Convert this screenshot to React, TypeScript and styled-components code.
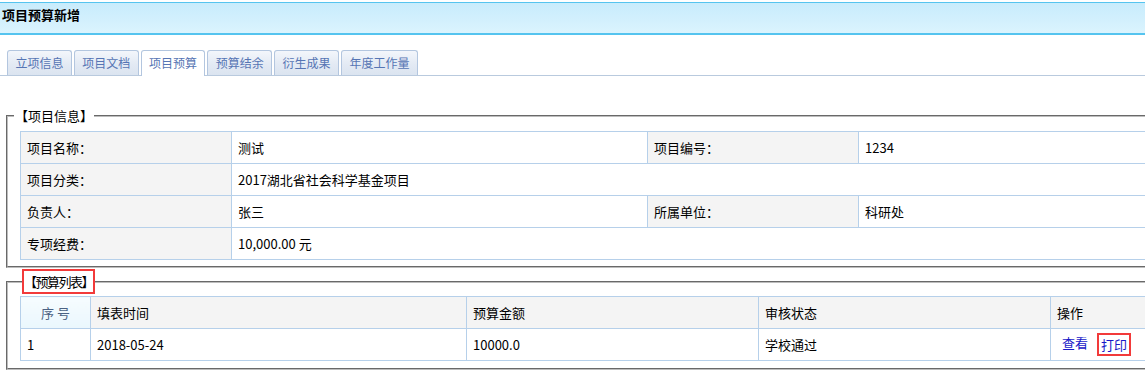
import React from "react";
import styled, { createGlobalStyle, css } from "styled-components";

const GlobalStyle = createGlobalStyle`
  html, body {
    margin: 0;
    padding: 0;
    background: #ffffff;
    overflow: hidden;
  }
  body {
    font-family: "Noto Sans CJK SC", "Liberation Sans", sans-serif;
    font-size: 13px;
    color: #000;
  }
`;

const Page = styled.div`
  padding-top: 2px;
  width: 1145px;
  overflow: hidden;
`;

const Header = styled.div`
  border-top: 1px solid #55c4ef;
  border-bottom: 2px solid #55c4ef;
  background: linear-gradient(180deg, #c8ecfc 0%, #d3f0fd 60%, #dbf4fe 100%);
  padding: 4px 0 0 2px;
  box-sizing: border-box;
  height: 33px;
`;

const Title = styled.h1`
  margin: 0;
  font-size: 13px;
  line-height: 16px;
  font-weight: 700;
  color: #000;
`;

const TabBar = styled.div`
  display: flex;
  align-items: flex-end;
  gap: 2px;
  margin-top: 15px;
  padding-left: 7px;
  border-bottom: 1px solid #b9cade;
  height: 25px;
`;

const Tab = styled.div<{ $active?: boolean }>`
  height: 24px;
  line-height: 24px;
  padding: 0 7.4px;
  font-size: 12px;
  color: #5675b4;
  border: 1px solid #b3c6df;
  border-bottom: none;
  border-radius: 3px 3px 0 0;
  background: linear-gradient(180deg, #f3f6fb 0%, #e3eaf4 55%, #dbe4f0 100%);
  white-space: nowrap;
  ${(p) =>
    p.$active &&
    css`
      background: #ffffff;
      height: 25px;
      margin-bottom: -1px;
    `}
`;

const FieldSet = styled.fieldset<{ $gap: number }>`
  margin: ${(p) => p.$gap}px 0 0 6px;
  padding: 0;
  width: 1282px;
  box-sizing: border-box;
  border: 2px groove #bdbdbd;
  min-inline-size: auto;
`;

const Legend = styled.legend`
  margin-left: 6px;
  padding: 0 1px;
  font-size: 13px;
  line-height: 16px;
`;

const MarkedLegend = styled.legend`
  margin-left: 14px;
  padding: 0;
`;

const Highlight = styled.span<{ $tight?: boolean }>`
  display: inline-block;
  border: 2px solid #f23a3a;
  ${(p) =>
    p.$tight
      ? css`
          padding: 2px 0;
          font-size: 13px;
          line-height: 17px;
          letter-spacing: -1.5px;
        `
      : css`
          padding: 0 2px;
          line-height: 19px;
          margin-left: 9px;
          vertical-align: middle;
        `}
`;

const FieldBody = styled.div<{ $top: number; $bottom: number }>`
  padding: ${(p) => p.$top}px 12px ${(p) => p.$bottom}px 12px;
`;

const Table = styled.table`
  border-collapse: collapse;
  table-layout: fixed;
  width: 1254px;
`;

const Cell = styled.td<{ $label?: boolean }>`
  height: 31px;
  padding: 0 6px;
  border: 1px solid #b6d0ea;
  font-size: 13px;
  line-height: 16px;
  color: #000;
  white-space: nowrap;
  background: ${(p) => (p.$label ? "#f4f4f4" : "#ffffff")};
`;

const HeadCell = styled.th<{ $index?: boolean }>`
  height: 31px;
  padding: 0 6px;
  border: 1px solid #b6d0ea;
  font-size: 13px;
  line-height: 16px;
  font-weight: 400;
  text-align: ${(p) => (p.$index ? "center" : "left")};
  color: ${(p) => (p.$index ? "#4b6283" : "#000")};
  background: ${(p) =>
    p.$index ? "linear-gradient(180deg, #f6fcff 0%, #eaf7fd 100%)" : "#f4f4f4"};
`;

const ActionLink = styled.a`
  color: #1818c8;
  text-decoration: none;
  margin-left: 5px;
  cursor: pointer;
`;

const PlainLink = styled.a`
  color: #1818c8;
  text-decoration: none;
  cursor: pointer;
`;

const tabs = ["立项信息", "项目文档", "项目预算", "预算结余", "衍生成果", "年度工作量"];

const infoRows: [string, string, string?, string?][] = [
  ["项目名称：", "测试", "项目编号：", "1234"],
  ["项目分类：", "2017湖北省社会科学基金项目"],
  ["负责人：", "张三", "所属单位：", "科研处"],
  ["专项经费：", "10,000.00 元"],
];

export default function App() {
  return (
    <Page>
      <GlobalStyle />
      <Header>
        <Title>项目预算新增</Title>
      </Header>

      <TabBar>
        {tabs.map((t) => (
          <Tab key={t} $active={t === "项目预算"}>
            {t}
          </Tab>
        ))}
      </TabBar>

      <FieldSet $gap={32}>
        <Legend>【项目信息】</Legend>
        <FieldBody $top={7} $bottom={6}>
          <Table>
            <colgroup>
              <col style={{ width: 211 }} />
              <col style={{ width: 416 }} />
              <col style={{ width: 211 }} />
              <col style={{ width: 416 }} />
            </colgroup>
            <tbody>
              {infoRows.map(([l1, v1, l2, v2]) => (
                <tr key={l1}>
                  <Cell $label>{l1}</Cell>
                  {l2 ? (
                    <>
                      <Cell>{v1}</Cell>
                      <Cell $label>{l2}</Cell>
                      <Cell>{v2}</Cell>
                    </>
                  ) : (
                    <Cell colSpan={3}>{v1}</Cell>
                  )}
                </tr>
              ))}
            </tbody>
          </Table>
        </FieldBody>
      </FieldSet>

      <FieldSet $gap={1}>
        <MarkedLegend>
          <Highlight $tight>【预算列表】</Highlight>
        </MarkedLegend>
        <FieldBody $top={2} $bottom={7}>
          <Table>
            <colgroup>
              <col style={{ width: 70 }} />
              <col style={{ width: 376 }} />
              <col style={{ width: 292 }} />
              <col style={{ width: 292 }} />
              <col style={{ width: 224 }} />
            </colgroup>
            <thead>
              <tr>
                <HeadCell $index>序 号</HeadCell>
                <HeadCell>填表时间</HeadCell>
                <HeadCell>预算金额</HeadCell>
                <HeadCell>审核状态</HeadCell>
                <HeadCell>操作</HeadCell>
              </tr>
            </thead>
            <tbody>
              <tr>
                <Cell>1</Cell>
                <Cell>2018-05-24</Cell>
                <Cell>10000.0</Cell>
                <Cell>学校通过</Cell>
                <Cell>
                  <ActionLink>查看</ActionLink>
                  <Highlight>
                    <PlainLink>打印</PlainLink>
                  </Highlight>
                </Cell>
              </tr>
            </tbody>
          </Table>
        </FieldBody>
      </FieldSet>
    </Page>
  );
}
